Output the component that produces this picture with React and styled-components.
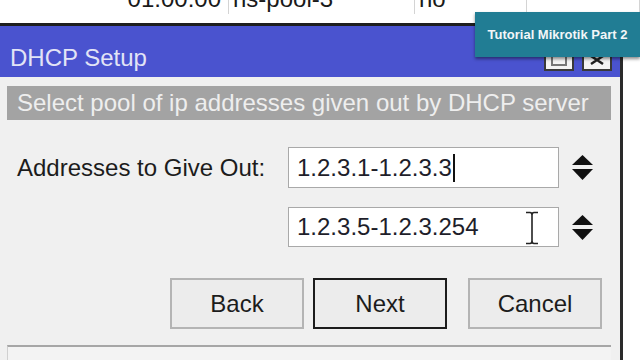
import React from 'react';
import styled, { createGlobalStyle } from 'styled-components';

const GlobalStyle = createGlobalStyle`
  html, body {
    margin: 0;
    padding: 0;
    background: #ffffff;
    overflow: hidden;
  }
  body {
    font-family: "Liberation Sans", Arial, sans-serif;
    width: 640px;
    height: 360px;
  }
`;

const Page = styled.div`
  position: relative;
  width: 640px;
  height: 360px;
  display: flex;
  flex-direction: column;
  background: #ffffff;
  overflow: hidden;
`;

const TableRow = styled.div`
  display: grid;
  grid-template-columns: 229px 186px 112px 1fr;
  height: 14px;
  flex-shrink: 0;
`;

const TableCell = styled.div`
  border-right: 1px solid #d4d4d4;
  font-size: 24px;
  line-height: 24px;
  margin-top: -13px;
  padding: ${({ $right }) => ($right ? '0 7px 0 0' : '0 0 0 4px')};
  text-align: ${({ $right }) => ($right ? 'right' : 'left')};
  color: #1a1a1a;
  white-space: nowrap;
  overflow: hidden;
  height: 27px;
`;

const Gap = styled.div`
  height: 9px;
  flex-shrink: 0;
`;

const Window = styled.div`
  flex: 1;
  margin-right: 17px;
  border-top: 3px solid #1e1e1e;
  border-right: 3px solid #2a2a2a;
  background: #f0f0f0;
  display: flex;
  flex-direction: column;
`;

const TitleBar = styled.div`
  height: 51px;
  background: #4a53cf;
  display: flex;
  align-items: flex-end;
  justify-content: space-between;
  padding: 0 8px 6px 10px;
  box-sizing: border-box;
  flex-shrink: 0;
`;

const Title = styled.div`
  color: #e2e4f6;
  font-size: 24px;
  line-height: 24px;
  margin-bottom: 1px;
`;

const TitleButtons = styled.div`
  display: flex;
  gap: 8px;
`;

const TitleButton = styled.div`
  width: 30px;
  height: 22px;
  box-sizing: border-box;
  background: #f4f4f4;
  border: 2px solid #3a3a3a;
  display: flex;
  align-items: center;
  justify-content: center;
`;

const Body = styled.div`
  flex: 1;
  display: flex;
  flex-direction: column;
  padding: 9px 9px 0 7px;
`;

const Banner = styled.div`
  height: 34px;
  background: #a3a3a3;
  color: #eeeeee;
  font-size: 24px;
  line-height: 34px;
  padding-left: 10px;
  white-space: nowrap;
  overflow: hidden;
`;

const FieldRow = styled.div`
  display: grid;
  grid-template-columns: 281px 271px 36px;
  align-items: center;
  height: ${({ $h }) => $h}px;
  margin-top: ${({ $top }) => $top}px;
`;

const Label = styled.div`
  font-size: 24px;
  color: #1c1c1c;
  padding-left: 10px;
  white-space: nowrap;
`;

const Input = styled.div`
  position: relative;
  height: 100%;
  box-sizing: border-box;
  background: #ffffff;
  border: 1px solid #a9a9a9;
  font-size: 24px;
  color: #1e1e2a;
  display: flex;
  align-items: center;
  padding-left: 8px;
`;

const Caret = styled.span`
  display: inline-block;
  width: 2px;
  height: 28px;
  background: #111;
  margin-left: 1px;
`;

const IBeam = styled.svg`
  position: absolute;
  left: 236px;
  top: 3px;
`;

const Spinner = styled.svg`
  justify-self: end;
  margin-right: 1px;
`;

const ButtonRow = styled.div`
  display: flex;
  justify-content: flex-end;
  height: 51px;
  margin-top: 31px;
  padding-right: 9px;
`;

const Button = styled.div`
  width: 134px;
  box-sizing: border-box;
  margin-left: ${({ $gap }) => $gap}px;
  background: #ececec;
  border: ${({ $default }) => ($default ? '2px solid #1c1c1c' : '2px solid #b4b4b4')};
  font-size: 24px;
  color: #1c1c1c;
  display: flex;
  align-items: center;
  justify-content: center;
`;

const StatusBox = styled.div`
  flex: 1;
  margin-top: 16px;
  border-top: 2px solid #a6a6a6;
  border-left: 1px solid #d0d0d0;
  background: #f3f3f3;
`;

const Badge = styled.div`
  position: absolute;
  left: 475px;
  top: 12px;
  width: 165px;
  height: 45px;
  background: #217d94;
  box-shadow: 0 2px 3px rgba(0, 0, 0, 0.45);
  color: #f2f6f8;
  font-weight: bold;
  font-size: 13px;
  display: flex;
  align-items: center;
  justify-content: center;
  z-index: 2;
`;

const SpinIcon = () => (
  <Spinner width="23" height="27" viewBox="0 0 23 27">
    <polygon points="1,11 11.5,1 22,11" fill="#111" />
    <polygon points="1,15 22,15 11.5,26" fill="#111" />
  </Spinner>
);

const App = () => (
  <Page>
    <GlobalStyle />
    <TableRow>
      <TableCell $right>01:00:00</TableCell>
      <TableCell>ns-pool-3</TableCell>
      <TableCell>no</TableCell>
      <TableCell />
    </TableRow>
    <Gap />
    <Window>
      <TitleBar>
        <Title>DHCP Setup</Title>
        <TitleButtons>
          <TitleButton>
            <svg width="16" height="12" viewBox="0 0 16 12">
              <rect x="1" y="1" width="14" height="10" fill="none" stroke="#777" strokeWidth="2" />
            </svg>
          </TitleButton>
          <TitleButton>
            <svg width="16" height="12" viewBox="0 0 16 12">
              <path d="M2 2 L14 10 M14 2 L2 10" stroke="#222" strokeWidth="2.5" />
            </svg>
          </TitleButton>
        </TitleButtons>
      </TitleBar>
      <Body>
        <Banner>Select pool of ip addresses given out by DHCP server</Banner>
        <FieldRow $h={41} $top={27}>
          <Label>Addresses to Give Out:</Label>
          <Input>
            1.2.3.1-1.2.3.3
            <Caret />
          </Input>
          <SpinIcon />
        </FieldRow>
        <FieldRow $h={40} $top={19}>
          <div />
          <Input>
            1.2.3.5-1.2.3.254
            <IBeam width="14" height="34" viewBox="0 0 14 34">
              <path d="M1 1.5 H5 Q7 1.5 7 4 V30 Q7 32.5 9 32.5 H13 M13 1.5 H9 Q7 1.5 7 4 M7 30 Q7 32.5 5 32.5 H1" fill="none" stroke="#222" strokeWidth="1.6" />
            </IBeam>
          </Input>
          <SpinIcon />
        </FieldRow>
        <ButtonRow>
          <Button $gap={0}>Back</Button>
          <Button $gap={9} $default>Next</Button>
          <Button $gap={21}>Cancel</Button>
        </ButtonRow>
        <StatusBox />
      </Body>
    </Window>
    <Badge>Tutorial Mikrotik Part 2</Badge>
  </Page>
);

export default App;
